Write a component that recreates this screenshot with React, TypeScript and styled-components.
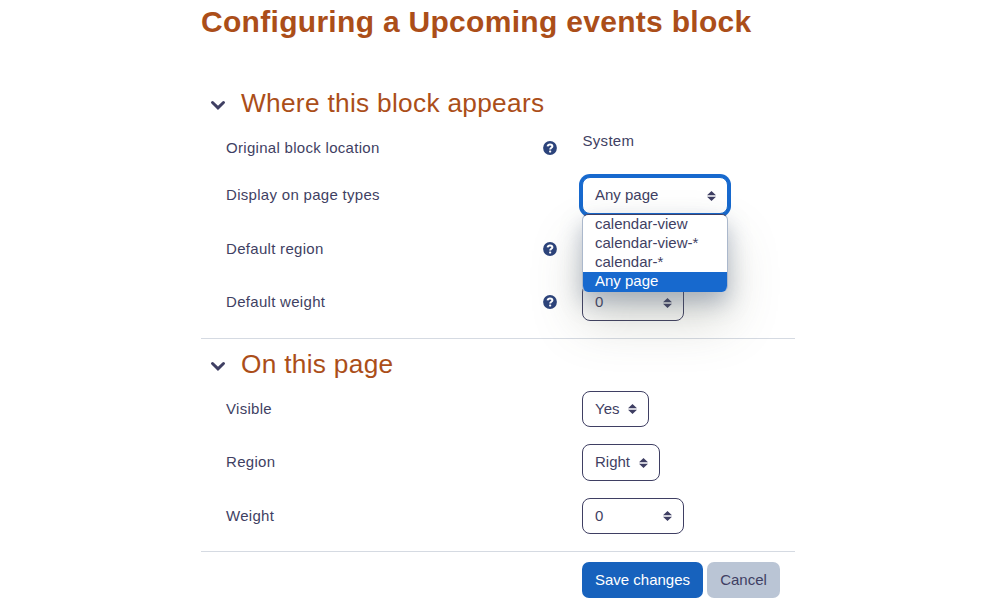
import React from "react";
import styled, { createGlobalStyle } from "styled-components";

const GlobalStyle = createGlobalStyle`
  * { box-sizing: border-box; }
  html, body { margin: 0; background: #fff; overflow: hidden; }
  body {
    font-family: "Liberation Sans", Arial, sans-serif;
    font-size: 15px;
    color: #3f3f63;
  }
`;

const Page = styled.main`
  width: 594px;
  height: 607px;
  margin-left: 201px;
  letter-spacing: 0.3px;
`;

const Title = styled.h1`
  margin: 0;
  padding-top: 4px;
  height: 84px;
  font-size: 30px;
  line-height: 36px;
  font-weight: 700;
  color: #ab4e19;
  white-space: nowrap;
`;

const Section = styled.section<{ $height: number }>`
  height: ${(p) => p.$height}px;
  border-bottom: 1px solid #d5dae2;
`;

const SectionHeader = styled.header<{ $height: number }>`
  display: flex;
  align-items: center;
  height: ${(p) => p.$height}px;
  padding-left: 9px;
  gap: 15px;
`;

const SectionTitle = styled.h2`
  margin: 0;
  font-size: 26.25px;
  line-height: 32px;
  font-weight: 400;
  color: #ab4e19;
`;

const ChevronIcon = styled.svg`
  width: 16px;
  height: 12px;
  margin-top: 4px;
  fill: none;
  stroke: #3f3f63;
  stroke-width: 3;
  stroke-linecap: round;
`;

const Rows = styled.div<{ $offset: number }>`
  display: flex;
  flex-direction: column;
  gap: 17px;
  padding-top: ${(p) => p.$offset}px;
`;

const Row = styled.div<{ $height?: number }>`
  display: grid;
  grid-template-columns: 317px 39px 1fr;
  align-items: center;
  height: ${(p) => p.$height ?? 36.5}px;
  padding-left: 25px;
`;

const Label = styled.label`
  line-height: 22px;
`;

const HelpBadge = styled.svg`
  display: block;
  width: 14px;
  height: 14px;
`;

const StaticValue = styled.div`
  line-height: 22px;
  margin-top: -14px;
  padding-left: 0.5px;
`;

const SelectWrap = styled.div<{ $width: number }>`
  position: relative;
  width: ${(p) => p.$width}px;
  height: 100%;
`;

const SelectBox = styled.button<{ $focused?: boolean }>`
  display: flex;
  align-items: center;
  justify-content: space-between;
  width: 100%;
  height: 100%;
  padding: 0 12px 1.2px;
  border: 1px solid ${(p) => (p.$focused ? "#1769ce" : "#3f3f63")};
  border-radius: 8px;
  box-shadow: ${(p) => (p.$focused ? "0 0 0 3px #1769ce" : "none")};
  background: #fff;
  font: inherit;
  letter-spacing: 0;
  color: inherit;
`;

const SortArrows = styled.svg`
  width: 9px;
  height: 10px;
  margin: 2px -1px 0 0;
  fill: #3f3f63;
`;

const Menu = styled.ul`
  position: absolute;
  z-index: 2;
  top: 37px;
  left: 0;
  width: 146px;
  height: 78px;
  margin: 0;
  padding: 0;
  list-style: none;
  overflow: hidden;
  letter-spacing: 0;
  background: #fff;
  border: 1px solid #abb8cc;
  border-top-color: #3f3f63;
  border-bottom-width: 0;
  border-radius: 6px;
  box-shadow: 0 10px 22px rgba(70, 90, 125, 0.36), 0 28px 50px rgba(90, 95, 70, 0.25);
`;

const Option = styled.li<{ $selected?: boolean }>`
  display: flex;
  align-items: center;
  height: ${(p) => (p.$selected ? 20 : 19)}px;
  padding: 0 0 ${(p) => (p.$selected ? 3 : 1.5)}px 12px;
  line-height: 17px;
  color: ${(p) => (p.$selected ? "#fff" : "#3f3f63")};
  background: ${(p) => (p.$selected ? "#1769ce" : "transparent")};
`;

const Actions = styled.footer`
  display: flex;
  gap: 4px;
  padding: 10px 0 0 381px;
`;

const ActionButton = styled.button<{ $primary?: boolean }>`
  width: ${(p) => (p.$primary ? 121 : 73)}px;
  height: 36px;
  padding: 0 0 2px;
  border: 0;
  border-radius: 7px;
  font: inherit;
  letter-spacing: 0;
  white-space: nowrap;
  color: ${(p) => (p.$primary ? "#fff" : "#3f3f63")};
  background: ${(p) => (p.$primary ? "#1762bd" : "#bac5d5")};
`;

function Heading({ height, children }: { height: number; children: React.ReactNode }) {
  return (
    <SectionHeader $height={height}>
      <ChevronIcon viewBox="0 0 16 12">
        <path d="M2.5 3.5L8 8.8l5.5-5.3" />
      </ChevronIcon>
      <SectionTitle>{children}</SectionTitle>
    </SectionHeader>
  );
}

function Help() {
  return (
    <HelpBadge viewBox="0 0 14 14" role="img" aria-label="Help">
      <circle cx="7" cy="7" r="6.9" fill="#2c437b" />
      <path
        d="M4.6 5.4C4.9 3.9 5.8 3.4 7 3.4c1.5 0 2.4.8 2.4 1.9 0 1.4-2.2 1.5-2.2 3.1"
        fill="none"
        stroke="#fff"
        strokeWidth="2"
      />
      <rect x="6.1" y="9.4" width="2.1" height="2" rx=".6" fill="#fff" />
    </HelpBadge>
  );
}

interface FieldProps {
  label: string;
  value?: string;
  width: number;
  help?: boolean;
  options?: string[];
}

function Field({ label, value, width, help, options }: FieldProps) {
  return (
    <Row>
      <Label>{label}</Label>
      <div>{help && <Help />}</div>
      <SelectWrap $width={width}>
        <SelectBox $focused={!!options}>
          <span>{value}</span>
          <SortArrows viewBox="0 0 9 10">
            <path d="M4.5 0L9 4.2H0zM0 5.8h9L4.5 10z" />
          </SortArrows>
        </SelectBox>
        {options && (
          <Menu>
            {options.map((o) => (
              <Option key={o} $selected={o === value}>
                {o}
              </Option>
            ))}
          </Menu>
        )}
      </SelectWrap>
    </Row>
  );
}

export default function App() {
  return (
    <>
      <GlobalStyle />
      <Page>
        <Title>Configuring a Upcoming events block</Title>
        <Section $height={255}>
          <Heading height={38}>Where this block appears</Heading>
          <Rows $offset={14}>
            <Row $height={24}>
              <Label>Original block location</Label>
              <div>
                <Help />
              </div>
              <StaticValue>System</StaticValue>
            </Row>
            <Field
              label="Display on page types"
              value="Any page"
              width={146}
              options={["calendar-view", "calendar-view-*", "calendar-*", "Any page"]}
            />
            <Field label="Default region" width={78} help />
            <Field label="Default weight" value="0" width={102} help />
          </Rows>
        </Section>
        <Section $height={213}>
          <Heading height={50}>On this page</Heading>
          <Rows $offset={1.6}>
            <Field label="Visible" value="Yes" width={67} />
            <Field label="Region" value="Right" width={78} />
            <Field label="Weight" value="0" width={102} />
          </Rows>
        </Section>
        <Actions>
          <ActionButton $primary>Save changes</ActionButton>
          <ActionButton>Cancel</ActionButton>
        </Actions>
      </Page>
    </>
  );
}
